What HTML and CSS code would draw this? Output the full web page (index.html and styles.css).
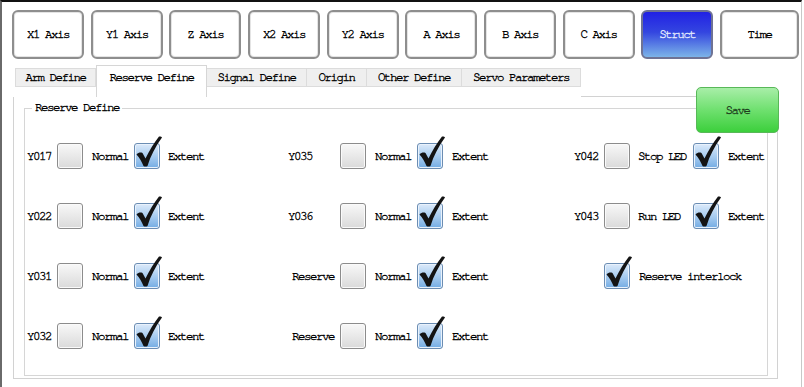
FILE: index.html
```html
<!DOCTYPE html>
<html>
<head>
<meta charset="utf-8">
<link rel="stylesheet" href="styles.css">
</head>
<body>
<div class="screen">
  <div class="toolbar">
    <button class="axis">X1 Axis</button>
    <button class="axis">Y1 Axis</button>
    <button class="axis">Z Axis</button>
    <button class="axis">X2 Axis</button>
    <button class="axis">Y2 Axis</button>
    <button class="axis">A Axis</button>
    <button class="axis">B Axis</button>
    <button class="axis">C Axis</button>
    <button class="axis active">Struct</button>
    <button class="axis last">Time</button>
  </div>
  <div class="tabwidget">
    <div class="tabs">
      <div class="tab w-arm">Arm Define</div>
      <div class="tab selected w-res">Reserve Define</div>
      <div class="tab w-sig">Signal Define</div>
      <div class="tab w-ori">Origin</div>
      <div class="tab w-oth">Other Define</div>
      <div class="tab w-servo">Servo Parameters</div>
      <div class="tab-fill"></div>
    </div>
    <div class="pane">
      <fieldset class="group">
        <legend>Reserve Define</legend>
        <div class="grid">
          <span class="lbl pl2">Y017</span><span class="cb"></span><span class="txt">Normal</span><span class="cb checked"><svg viewBox="0 -8 30 34"><path d="M2.5 11.5 C4.5 9.5 6.5 9 8.5 10 L11.5 15.5 C15.5 7 20 0 25 -6.5 C26 -6.8 27.5 -6.5 28 -5.5 C21.5 3.5 16.5 13 13.5 23 C12.5 23.8 10.5 23.8 9.5 23 C7.5 18.5 5.5 14.5 2.5 11.5 Z"/></svg></span><span class="txt">Extent</span>
          <span class="lbl">Y035</span><span class="cb"></span><span class="txt">Normal</span><span class="cb checked"><svg viewBox="0 -8 30 34"><path d="M2.5 11.5 C4.5 9.5 6.5 9 8.5 10 L11.5 15.5 C15.5 7 20 0 25 -6.5 C26 -6.8 27.5 -6.5 28 -5.5 C21.5 3.5 16.5 13 13.5 23 C12.5 23.8 10.5 23.8 9.5 23 C7.5 18.5 5.5 14.5 2.5 11.5 Z"/></svg></span><span class="txt">Extent</span>
          <span class="lbl">Y042</span><span class="cb"></span><span class="txt">Stop LED</span><span class="cb checked"><svg viewBox="0 -8 30 34"><path d="M2.5 11.5 C4.5 9.5 6.5 9 8.5 10 L11.5 15.5 C15.5 7 20 0 25 -6.5 C26 -6.8 27.5 -6.5 28 -5.5 C21.5 3.5 16.5 13 13.5 23 C12.5 23.8 10.5 23.8 9.5 23 C7.5 18.5 5.5 14.5 2.5 11.5 Z"/></svg></span><span class="txt">Extent</span>

          <span class="lbl pl2">Y022</span><span class="cb"></span><span class="txt">Normal</span><span class="cb checked"><svg viewBox="0 -8 30 34"><path d="M2.5 11.5 C4.5 9.5 6.5 9 8.5 10 L11.5 15.5 C15.5 7 20 0 25 -6.5 C26 -6.8 27.5 -6.5 28 -5.5 C21.5 3.5 16.5 13 13.5 23 C12.5 23.8 10.5 23.8 9.5 23 C7.5 18.5 5.5 14.5 2.5 11.5 Z"/></svg></span><span class="txt">Extent</span>
          <span class="lbl">Y036</span><span class="cb"></span><span class="txt">Normal</span><span class="cb checked"><svg viewBox="0 -8 30 34"><path d="M2.5 11.5 C4.5 9.5 6.5 9 8.5 10 L11.5 15.5 C15.5 7 20 0 25 -6.5 C26 -6.8 27.5 -6.5 28 -5.5 C21.5 3.5 16.5 13 13.5 23 C12.5 23.8 10.5 23.8 9.5 23 C7.5 18.5 5.5 14.5 2.5 11.5 Z"/></svg></span><span class="txt">Extent</span>
          <span class="lbl">Y043</span><span class="cb"></span><span class="txt">Run LED</span><span class="cb checked"><svg viewBox="0 -8 30 34"><path d="M2.5 11.5 C4.5 9.5 6.5 9 8.5 10 L11.5 15.5 C15.5 7 20 0 25 -6.5 C26 -6.8 27.5 -6.5 28 -5.5 C21.5 3.5 16.5 13 13.5 23 C12.5 23.8 10.5 23.8 9.5 23 C7.5 18.5 5.5 14.5 2.5 11.5 Z"/></svg></span><span class="txt">Extent</span>

          <span class="lbl pl2">Y031</span><span class="cb"></span><span class="txt">Normal</span><span class="cb checked"><svg viewBox="0 -8 30 34"><path d="M2.5 11.5 C4.5 9.5 6.5 9 8.5 10 L11.5 15.5 C15.5 7 20 0 25 -6.5 C26 -6.8 27.5 -6.5 28 -5.5 C21.5 3.5 16.5 13 13.5 23 C12.5 23.8 10.5 23.8 9.5 23 C7.5 18.5 5.5 14.5 2.5 11.5 Z"/></svg></span><span class="txt">Extent</span>
          <span class="lbl pl4">Reserve</span><span class="cb"></span><span class="txt">Normal</span><span class="cb checked"><svg viewBox="0 -8 30 34"><path d="M2.5 11.5 C4.5 9.5 6.5 9 8.5 10 L11.5 15.5 C15.5 7 20 0 25 -6.5 C26 -6.8 27.5 -6.5 28 -5.5 C21.5 3.5 16.5 13 13.5 23 C12.5 23.8 10.5 23.8 9.5 23 C7.5 18.5 5.5 14.5 2.5 11.5 Z"/></svg></span><span class="txt">Extent</span>
          <span class="lbl"></span><span class="cb checked"><svg viewBox="0 -8 30 34"><path d="M2.5 11.5 C4.5 9.5 6.5 9 8.5 10 L11.5 15.5 C15.5 7 20 0 25 -6.5 C26 -6.8 27.5 -6.5 28 -5.5 C21.5 3.5 16.5 13 13.5 23 C12.5 23.8 10.5 23.8 9.5 23 C7.5 18.5 5.5 14.5 2.5 11.5 Z"/></svg></span><span class="txt span3">Reserve interlock</span>

          <span class="lbl pl2">Y032</span><span class="cb"></span><span class="txt">Normal</span><span class="cb checked"><svg viewBox="0 -8 30 34"><path d="M2.5 11.5 C4.5 9.5 6.5 9 8.5 10 L11.5 15.5 C15.5 7 20 0 25 -6.5 C26 -6.8 27.5 -6.5 28 -5.5 C21.5 3.5 16.5 13 13.5 23 C12.5 23.8 10.5 23.8 9.5 23 C7.5 18.5 5.5 14.5 2.5 11.5 Z"/></svg></span><span class="txt">Extent</span>
          <span class="lbl pl4">Reserve</span><span class="cb"></span><span class="txt">Normal</span><span class="cb checked"><svg viewBox="0 -8 30 34"><path d="M2.5 11.5 C4.5 9.5 6.5 9 8.5 10 L11.5 15.5 C15.5 7 20 0 25 -6.5 C26 -6.8 27.5 -6.5 28 -5.5 C21.5 3.5 16.5 13 13.5 23 C12.5 23.8 10.5 23.8 9.5 23 C7.5 18.5 5.5 14.5 2.5 11.5 Z"/></svg></span><span class="txt">Extent</span>
        </div>
      </fieldset>
    </div>
  </div>
  <button class="save">Save</button>
</div>
</body>
</html>
```

FILE: styles.css
```css
* { box-sizing: border-box; }
html, body { margin: 0; padding: 0; background: #fff; }
body {
  font-family: "FreeMono", "Liberation Mono", monospace;
  font-size: 12.5px;
  letter-spacing: -1.5px;
  -webkit-text-stroke: 0.35px #000;
  color: #000;
}
.screen {
  position: relative;
  width: 802px;
  height: 387px;
  border-top: 2px solid #111;
  border-left: 2px solid #6a6a6a;
  border-right: 1px solid #c8c8c8;
  overflow: hidden;
}
.toolbar {
  display: flex;
  gap: 6.67px;
  padding: 8px 0 0 10px;
}
button {
  font: inherit;
  letter-spacing: inherit;
  color: inherit;
  margin: 0;
  padding: 0;
  cursor: default;
}
.axis {
  width: 72px;
  height: 49px;
  background: #fff;
  border: 2px solid #8e8e8e;
  border-radius: 6px;
  box-shadow: inset 0 0 0 1px #e4e4e4;
}
.axis.last { width: 79px; }
.axis.active {
  background: linear-gradient(#2121e4 0%, #3446e0 45%, #7cb4e8 100%);
  border-color: #6f7394;
  color: #e6ecff;
  -webkit-text-stroke: 0.3px #e6ecff;
  box-shadow: none;
}
.tabwidget {
  margin: 6px 0 0 11px;
  width: 765px;
}
.tabs {
  display: flex;
  align-items: flex-start;
  height: 32px;
  padding-left: 2px;
}
.tab {
  margin-top: 3px;
  height: 19px;
  background: #efefef;
  border: 1px solid #dcdcdc;
  border-left: none;
  display: flex;
  align-items: center;
  justify-content: center;
  white-space: nowrap;
}
.tab.w-arm { border-left: 1px solid #dcdcdc; }
.tab.selected {
  margin-top: 0;
  height: 32px;
  background: #fff;
  border: 1px solid #d6d6d6;
  border-bottom: none;
  align-items: flex-start;
  padding-top: 5px;
}
.w-arm { width: 81px; }
.w-res { width: 111px; }
.w-sig { width: 100px; }
.w-ori { width: 60px; }
.w-oth { width: 95px; }
.w-servo { width: 119px; }
.tab-fill {
  flex: 1;
  align-self: stretch;
  border-bottom: 1px solid #d2d2d2;
}
.pane {
  height: 282px;
  border: 1px solid #d2d2d2;
  border-top: none;
  padding: 5px 0 0 10px;
}
.group {
  margin: 0;
  padding: 0;
  width: 744px;
  height: 274px;
  border: 1px solid #d6d6d6;
  min-width: 0;
}
.group legend {
  margin-left: 7px;
  padding: 0 3px;
  line-height: 12px;
}
.grid {
  display: grid;
  grid-template-columns: 32px 35px 42px 34px 120px 52px 35px 42px 35px 122px 30px 34px 55px 35px 39px;
  grid-auto-rows: 60px;
  align-items: center;
  margin-top: 12px;
}
.lbl, .txt { white-space: nowrap; }
.pl2 { padding-left: 2px; }
.pl4 { padding-left: 4px; }
.span3 { grid-column: span 3; padding-left: 1px; }
.cb {
  position: relative;
  width: 26px;
  height: 26px;
  border: 1px solid #8c8c8c;
  border-radius: 3px;
  background: linear-gradient(#f8f8f8, #dadada);
  box-shadow: inset 0 0 0 1px #fafafa;
}
.cb.checked {
  border-color: #6b8db3;
  background: linear-gradient(#dceafa 0%, #a9cdf0 50%, #74ace3 100%);
  box-shadow: inset 0 0 0 1px #e9f2fc;
}
.cb svg {
  position: absolute;
  left: -1px;
  top: -9px;
  width: 30px;
  height: 34px;
  overflow: visible;
  fill: #141414;
}
.save {
  position: absolute;
  left: 694px;
  top: 85px;
  width: 83px;
  height: 46px;
  border: 1px solid #58b858;
  border-radius: 5px;
  background: linear-gradient(#a8eea8 0%, #6fe06f 50%, #3ccf3c 100%);
  color: #1d3d1d;
  -webkit-text-stroke: 0.3px #1d3d1d;
}
```
